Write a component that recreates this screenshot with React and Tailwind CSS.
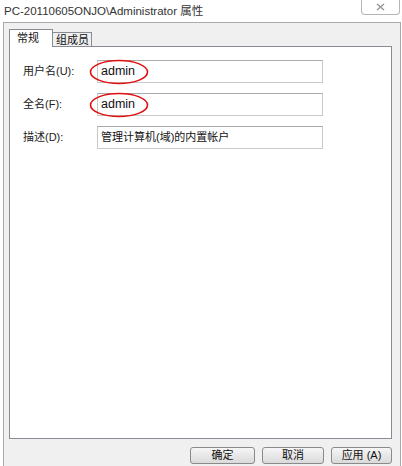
import React from 'react';

const fields = [
  { label: '用户名(U):', value: 'admin', circled: true },
  { label: '全名(F):', value: 'admin', circled: true },
  { label: '描述(D):', value: '管理计算机(域)的内置帐户', circled: false },
];

const font = "font-['Liberation_Sans','Noto_Sans_CJK_SC',sans-serif]";

const Field = ({ label, value, circled }) => (
  <div className="flex items-center h-[23px]">
    <div className="w-[74px] text-[11px] text-[#222]">{label}</div>
    <div className="relative w-[226px] h-[23px] border border-[#c9c9c9] border-t-[#ababab] bg-white flex items-center pl-[3px] text-[11px] text-[#111]">
      {value === 'admin' ? <span className="text-[12.5px]">{value}</span> : value}
      {circled && (
        <svg
          className="absolute left-[-9px] top-[-2px]"
          width="60"
          height="26"
          viewBox="0 0 60 26"
        >
          <ellipse cx="30" cy="13" rx="28.5" ry="11.5" fill="none" stroke="#e01010" strokeWidth="1.6" />
        </svg>
      )}
    </div>
  </div>
);

const Button = ({ children, width }) => (
  <button
    className={`${width} h-[17px] rounded-[3px] border border-[#8a8a8a] bg-gradient-to-b from-[#f6f6f6] to-[#dadada] text-[11px] leading-none text-[#111] flex items-center justify-center`}
  >
    {children}
  </button>
);

const App = () => (
  <div className={`w-[402px] h-[466px] bg-white overflow-hidden flex flex-col ${font}`}>
    {/* Title bar */}
    <div className="h-[22px] flex items-start justify-between">
      <div className="pl-[4px] pt-[3px] text-[11.5px] text-[#333] leading-[16px] whitespace-nowrap">
        PC-20110605ONJO\Administrator 属性
      </div>
      <div className="w-[39px] h-[15px] mr-[2px] border border-t-0 border-[#b5b5b5] rounded-b-[4px] flex items-center justify-center">
        <svg width="9" height="8" viewBox="0 0 9 8">
          <path d="M1 1 L8 7 M8 1 L1 7" stroke="#9a9a9a" strokeWidth="1.6" fill="none" />
        </svg>
      </div>
    </div>

    {/* Dialog body */}
    <div className="flex-1 ml-[3px] mr-[1px] border-l border-t border-r border-[#a9a9a9] bg-[#f0f0f0] pl-[5px] pt-[5px]">
      {/* Tabs */}
      <div className="flex items-end h-[18px] relative z-10">
        <div className="w-[44px] h-[18px] -mb-px bg-white border border-b-0 border-[#898c95] text-[11px] text-[#111] pl-[7px] leading-[17px] whitespace-nowrap">
          常规
        </div>
        <div className="w-[39px] h-[14px] bg-[#f0f0f0] border border-l-0 border-b-0 border-[#898c95] text-[11px] text-[#111] pl-[3px] leading-[14px] whitespace-nowrap">
          组成员
        </div>
      </div>

      {/* Panel */}
      <div className="w-[383px] h-[393px] border border-[#898c95] bg-white pt-[13px] pl-[13px] flex flex-col gap-[10px]">
        {fields.map(f => (
          <Field key={f.label} {...f} />
        ))}
      </div>

      {/* Buttons */}
      <div className="flex justify-end gap-[7px] w-[383px] mt-[8px]">
        <Button width="w-[65px]">确定</Button>
        <Button width="w-[62px]">取消</Button>
        <Button width="w-[61px]">应用 (A)</Button>
      </div>
    </div>
  </div>
);

export default App;
